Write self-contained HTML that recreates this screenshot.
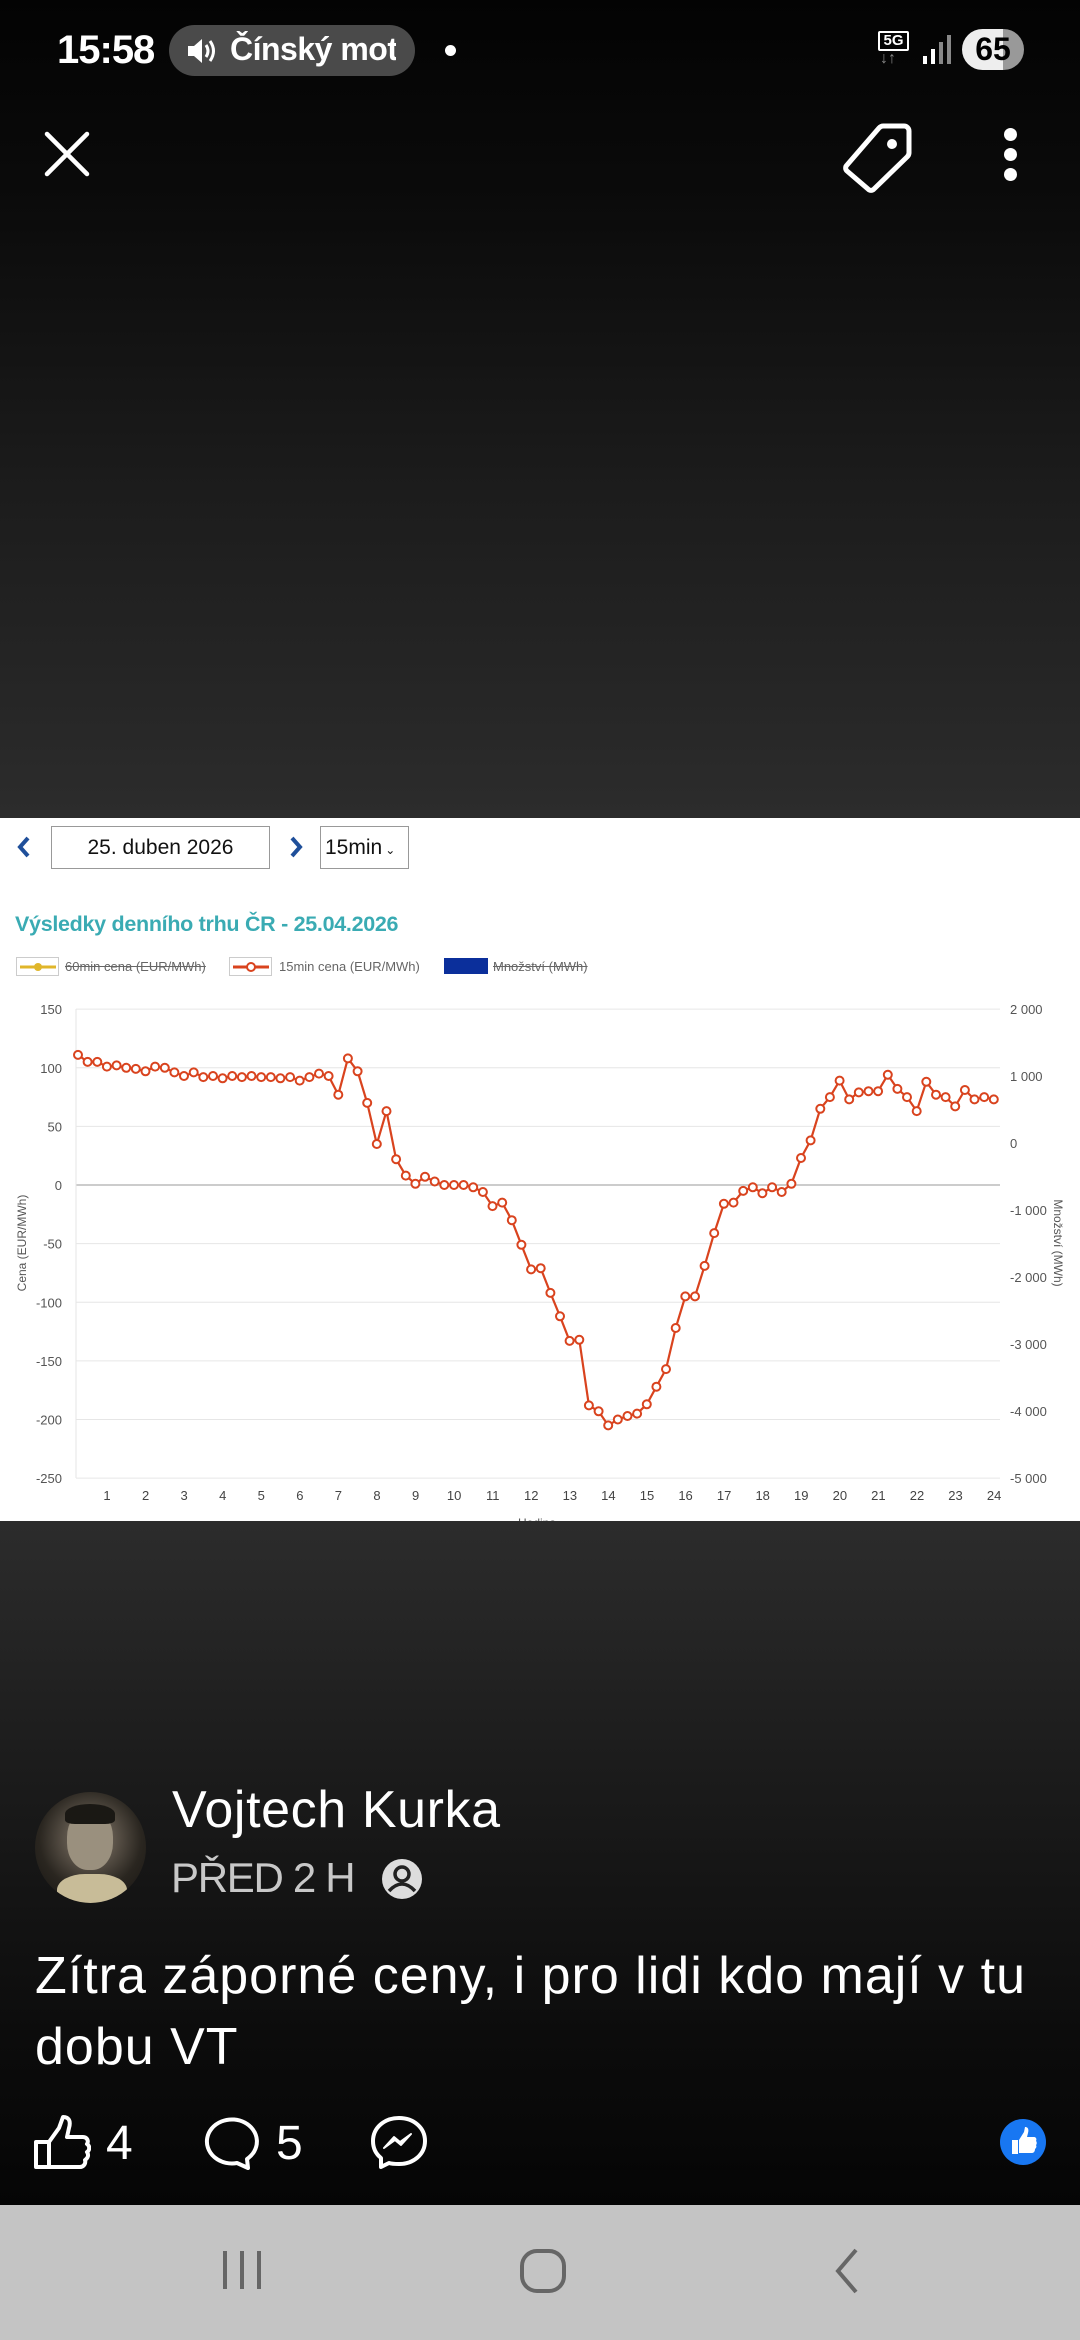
<!DOCTYPE html>
<html><head><meta charset="utf-8">
<style>
*{margin:0;padding:0;box-sizing:border-box}
body{width:1080px;height:2340px;position:relative;overflow:hidden;font-family:"Liberation Sans",sans-serif;background:#000}
.top{position:absolute;left:0;top:0;width:1080px;height:818px;background:linear-gradient(#030303 0%,#0b0b0b 25%,#1c1c1c 60%,#2c2c2c 100%)}
.bot{position:absolute;left:0;top:1521px;width:1080px;height:684px;background:linear-gradient(#2c2c2c 0%,#1c1c1c 35%,#0c0c0c 75%,#050505 100%)}
.chart{position:absolute;left:0;top:818px;width:1080px;height:703px;background:#fff}
.nav{position:absolute;left:0;top:2205px;width:1080px;height:135px;background:#c4c4c4}
.abs{position:absolute;white-space:nowrap}
</style></head><body>
<div class="top"></div>
<div class="bot"></div>
<div class="nav"></div>

<div class="abs" style="left:57px;top:28px;color:#fff;font-size:40px;font-weight:bold;letter-spacing:-1px">15:58</div>
<div class="abs" style="left:169px;top:25px;width:246px;height:51px;border-radius:26px;background:#4a4a4a"></div>
<svg class="abs" style="left:186px;top:36px" width="32" height="30" viewBox="0 0 32 30"><path d="M2 10h6l8-7v24l-8-7H2z" fill="#fff"/><path d="M20 9q4 6 0 12M24 5q7 10 0 20" stroke="#fff" stroke-width="3" fill="none"/></svg>
<div class="abs" style="left:230px;top:31px;color:#fff;font-size:32px;font-weight:bold;width:166px;overflow:hidden;letter-spacing:-0.5px">Čínský mot</div>
<div class="abs" style="left:445px;top:45px;width:11px;height:11px;border-radius:50%;background:#fff"></div>
<div class="abs" style="left:878px;top:31px;width:31px;height:20px;border:2px solid #fff;border-radius:2px;color:#fff;font-size:15px;font-weight:bold;text-align:center;line-height:16px">5G</div>
<div class="abs" style="left:880px;top:50px;color:#888;font-size:16px;font-weight:bold">↓↑</div>
<svg class="abs" style="left:922px;top:34px" width="30" height="32"><rect x="1" y="22" width="4" height="8" fill="#fff"/><rect x="9" y="15" width="4" height="15" fill="#fff"/><rect x="17" y="8" width="4" height="22" fill="#888"/><rect x="25" y="1" width="4" height="29" fill="#888"/></svg>
<div class="abs" style="left:962px;top:29px;width:62px;height:41px;border-radius:21px;background:linear-gradient(90deg,#eee 0,#eee 66%,#999 66%);color:#000;font-size:32px;font-weight:bold;text-align:center;line-height:41px">65</div>

<svg class="abs" style="left:44px;top:131px" width="46" height="46"><path d="M3 3L43 43M43 3L3 43" stroke="#fff" stroke-width="4.5" stroke-linecap="round"/></svg>
<svg class="abs" style="left:840px;top:122px" width="76" height="72" viewBox="0 0 76 72"><path d="M44 4h20a5 5 0 0 1 5 5v22a6 6 0 0 1-2 4L34 67a4 4 0 0 1-6 0L7 49a4 4 0 0 1 0-6L39 6a6 6 0 0 1 5-2z" fill="none" stroke="#fff" stroke-width="5" stroke-linejoin="round"/><circle cx="52" cy="22" r="5" fill="#fff"/></svg>
<div class="abs" style="left:1004px;top:128px;width:13px;height:13px;border-radius:50%;background:#fff"></div>
<div class="abs" style="left:1004px;top:148px;width:13px;height:13px;border-radius:50%;background:#fff"></div>
<div class="abs" style="left:1004px;top:168px;width:13px;height:13px;border-radius:50%;background:#fff"></div>

<div class="chart"></div>
<svg class="abs" style="left:16px;top:836px" width="16" height="22"><path d="M12 2L4 11l8 9" stroke="#1f4f9a" stroke-width="4" fill="none"/></svg>
<div class="abs" style="left:51px;top:826px;width:219px;height:43px;border:1px solid #999;font-size:21px;color:#111;text-align:center;line-height:41px">25. duben 2026</div>
<svg class="abs" style="left:288px;top:836px" width="16" height="22"><path d="M4 2l8 9-8 9" stroke="#1f4f9a" stroke-width="4" fill="none"/></svg>
<div class="abs" style="left:320px;top:826px;width:89px;height:43px;border:1px solid #999;font-size:21px;color:#111;line-height:41px;padding-left:4px">15min<span style="font-size:12px;margin-left:3px">⌄</span></div>
<div class="abs" style="left:15px;top:912px;font-size:21.5px;font-weight:bold;color:#3aabb3;letter-spacing:-0.3px">Výsledky denního trhu ČR - 25.04.2026</div>

<svg class="abs" style="left:16px;top:957px" width="44" height="20"><rect x="0.5" y="0.5" width="42" height="18" fill="#fff" stroke="#ccc"/><path d="M4 10h36" stroke="#e0b62a" stroke-width="3"/><circle cx="22" cy="10" r="4" fill="#e0b62a"/></svg>
<div class="abs" style="left:65px;top:959px;font-size:13px;color:#666;text-decoration:line-through">60min cena (EUR/MWh)</div>
<svg class="abs" style="left:229px;top:957px" width="44" height="20"><rect x="0.5" y="0.5" width="42" height="18" fill="#fff" stroke="#ccc"/><path d="M4 10h36" stroke="#d9431e" stroke-width="3"/><circle cx="22" cy="10" r="4" fill="#fff" stroke="#d9431e" stroke-width="2"/></svg>
<div class="abs" style="left:279px;top:959px;font-size:13px;color:#666">15min cena (EUR/MWh)</div>
<div class="abs" style="left:444px;top:958px;width:44px;height:16px;background:#0b2f9b"></div>
<div class="abs" style="left:493px;top:959px;font-size:13px;color:#666;text-decoration:line-through">Množství (MWh)</div>

<svg id="plot" class="abs" style="left:0;top:0" width="1080" height="1521" viewBox="0 0 1080 1521"></svg>

<div class="abs" style="left:35px;top:1792px;width:111px;height:111px;border-radius:50%;background:radial-gradient(circle at 50% 42%,#8a8070 0,#5a5248 30%,#2a2620 60%,#141210 100%);overflow:hidden">
<div style="position:absolute;left:32px;top:18px;width:46px;height:60px;border-radius:45%;background:#9a907e"></div>
<div style="position:absolute;left:30px;top:12px;width:50px;height:20px;border-radius:50% 50% 20% 20%;background:#1a1814"></div>
<div style="position:absolute;left:22px;top:82px;width:70px;height:40px;border-radius:40%;background:#c8bc98"></div>
</div>
<div class="abs" style="left:172px;top:1780px;color:#fff;font-size:52px;letter-spacing:0.6px">Vojtech Kurka</div>
<div class="abs" style="left:171px;top:1854px;color:#c8c8c8;font-size:42px;letter-spacing:-1.3px">PŘED 2 H</div>
<svg class="abs" style="left:380px;top:1857px" width="44" height="44" viewBox="0 0 44 44"><circle cx="22" cy="22" r="20" fill="#ddd"/><circle cx="22" cy="17" r="7" fill="none" stroke="#222" stroke-width="3.5"/><path d="M9 34q13-14 26 0" fill="none" stroke="#222" stroke-width="3.5"/></svg>
<div class="abs" style="left:35px;top:1941px;color:#fff;font-size:52px;line-height:71px;letter-spacing:1px">Zítra záporné ceny, i pro lidi kdo mají v tu<br>dobu VT</div>

<svg class="abs" style="left:33px;top:2115px" width="58" height="55" viewBox="0 0 58 55"><path d="M3 27h13v25H3zM16 27l10-14 4-11c6 0 8 4 6 11l-2 9h16c4 0 6 4 4 7 3 2 3 6 0 8 2 3 1 6-2 8 1 3-1 7-5 7H16" fill="none" stroke="#fff" stroke-width="4" stroke-linejoin="round"/></svg>
<div class="abs" style="left:106px;top:2116px;color:#fff;font-size:48px">4</div>
<svg class="abs" style="left:201px;top:2115px" width="60" height="55" viewBox="0 0 60 55"><path d="M46 44A25 22 0 1 0 36 48l11 5z" fill="none" stroke="#fff" stroke-width="4" stroke-linejoin="round"/></svg>
<div class="abs" style="left:276px;top:2116px;color:#fff;font-size:48px">5</div>
<svg class="abs" style="left:370px;top:2115px" width="58" height="55" viewBox="0 0 58 55"><path d="M29 3C14 3 3 13 3 26c0 7 3 13 8 17v9l8-4c3 1 6 1 10 1 15 0 26-10 26-23S44 3 29 3z" fill="none" stroke="#fff" stroke-width="4" stroke-linejoin="round"/><path d="M14 33l10-11 6 5 11-8-10 11-6-5z" fill="#fff" stroke="#fff" stroke-width="2" stroke-linejoin="round"/></svg>
<svg class="abs" style="left:999px;top:2118px" width="48" height="48" viewBox="0 0 48 48"><circle cx="24" cy="24" r="23" fill="#1877f2"/><path d="M13 22h6v14h-6zM20 22l5-8 1-5c3 0 4 2 3 6l-1 4h7c2 0 3 2 2 4 1 1 1 3 0 4 1 2 0 3-1 4 0 2-1 4-3 4H20z" fill="#fff"/></svg>

<svg class="abs" style="left:220px;top:2248px" width="46" height="44"><path d="M5 3v38M22 3v38M39 3v38" stroke="#666" stroke-width="4"/></svg>
<svg class="abs" style="left:518px;top:2247px" width="52" height="48"><rect x="4" y="4" width="42" height="40" rx="15" fill="none" stroke="#666" stroke-width="4"/></svg>
<svg class="abs" style="left:830px;top:2247px" width="32" height="48"><path d="M26 3L8 24l18 21" stroke="#666" stroke-width="4" fill="none"/></svg>

<script>
(function(){
var s=document.getElementById('plot'),h='';
function Y(v){return 1185-v*1.1725;}
var L=76,R=1000;
for(var v=150;v>=-250;v-=50){var y=Y(v);h+='<line x1="'+L+'" x2="'+R+'" y1="'+y+'" y2="'+y+'" stroke="'+(v==0?'#bbb':'#e6e6e6')+'" stroke-width="'+(v==0?1.5:1)+'"/>';
h+='<text x="62" y="'+(y+5)+'" font-size="13" fill="#555" text-anchor="end" font-family="Liberation Sans">'+v+'</text>';}
h+='<line x1="'+L+'" x2="'+L+'" y1="1009" y2="1478" stroke="#e6e6e6"/>';
var rl=['2 000','1 000','0','-1 000','-2 000','-3 000','-4 000','-5 000'];
for(var i=0;i<8;i++){h+='<text x="1010" y="'+(1014+i*67)+'" font-size="13" fill="#555" font-family="Liberation Sans">'+rl[i]+'</text>';}
for(var k=1;k<=24;k++){h+='<text x="'+(107+(k-1)*38.57)+'" y="1500" font-size="13" fill="#444" text-anchor="middle" font-family="Liberation Sans">'+k+'</text>';}
h+='<text transform="translate(26,1243) rotate(-90)" font-size="12" fill="#555" text-anchor="middle" font-family="Liberation Sans">Cena (EUR/MWh)</text>';
h+='<text transform="translate(1054,1243) rotate(90)" font-size="12" fill="#555" text-anchor="middle" font-family="Liberation Sans">Množství (MWh)</text>';
h+='<text x="537" y="1527" font-size="12" fill="#555" text-anchor="middle" font-family="Liberation Sans">Hodina</text>';
var d=[111,105,105,101,102,100,99,97,101,100,96,93,96,92,93,91,93,92,93,92,92,91,92,89,92,95,93,77,108,97,70,35,63,22,8,1,7,3,0,0,0,-2,-6,-18,-15,-30,-51,-72,-71,-92,-112,-133,-132,-188,-193,-205,-200,-197,-195,-187,-172,-157,-122,-95,-95,-69,-41,-16,-15,-5,-2,-7,-2,-6,1,23,38,65,75,89,73,79,80,80,94,82,75,63,88,77,75,67,81,73,75,73];
var p='',c='';
for(var i=0;i<d.length;i++){var x=78+i*9.64,y=Y(d[i]);p+=(i?'L':'M')+x.toFixed(1)+' '+y.toFixed(1);c+='<circle cx="'+x.toFixed(1)+'" cy="'+y.toFixed(1)+'" r="4" fill="#fff" stroke="#d9431e" stroke-width="2"/>';}
h+='<path d="'+p+'" fill="none" stroke="#d9431e" stroke-width="2.2"/>'+c;
s.innerHTML=h;
})();
</script>
</body></html>
